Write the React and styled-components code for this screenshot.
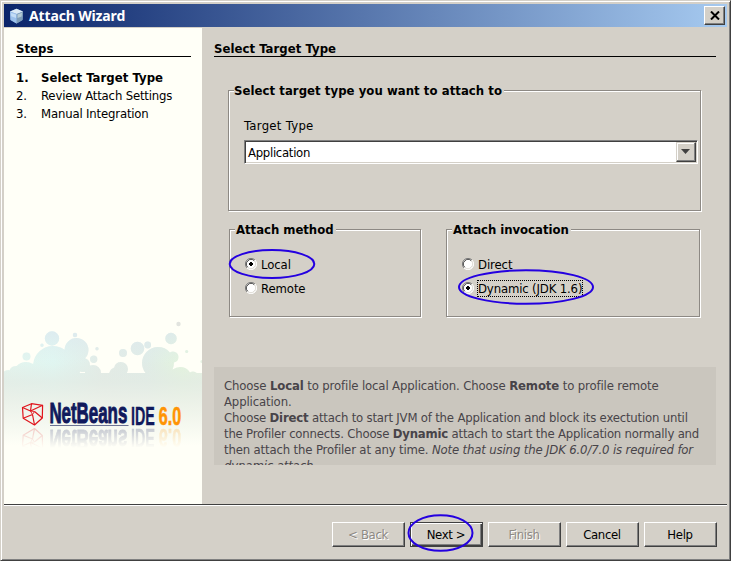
import React from 'react';
import styled, { createGlobalStyle, css } from 'styled-components';

const Global = createGlobalStyle`
  * { box-sizing: border-box; }
  body { margin: 0; background: #d4d0c8; }
`;

const Window = styled.div`
  width: 731px;
  height: 561px;
  padding: 2px 2px 0 2px;
  display: flex;
  flex-direction: column;
  overflow: hidden;
  background: #d4d0c8;
  color: #000;
  font: 13px/18px "DejaVu Sans Condensed", "DejaVu Sans", sans-serif;
  letter-spacing: -0.13px;
  white-space: nowrap;
  border: 1px solid;
  border-color: #d4d0c8 #404040 #404040 #d4d0c8;
  box-shadow: inset 1px 1px 0 #fff, inset -1px -1px 0 #808080;
`;

const TitleBar = styled.header`
  height: 23px;
  margin: 1px 0 0 1px;
  flex: none;
  width: 723px;
  padding: 0 2px 0 5px;
  display: flex;
  align-items: center;
  background: linear-gradient(90deg, #0a246a, #a6caf0);
`;

const Title = styled.h1`
  flex: 1;
  margin: 1px 0 0 5px;
  font: bold 14px/18px "Noto Sans", sans-serif;
  letter-spacing: -0.15px;
  color: #fff;
`;

const raised = css`
  border: 1px solid;
  border-color: #fff #404040 #404040 #fff;
  box-shadow: inset -1px -1px 0 #808080;
`;

const CloseButton = styled.button`
  ${raised}
  width: 21px;
  height: 19px;
  padding: 0;
  display: grid;
  place-items: center;
  background: #d4d0c8;
`;

const Body = styled.div`
  display: flex;
  width: 723px;
  height: 476px;
  flex: none;
  margin: 1px 0 0 1px;
`;

const Sidebar = styled.aside`
  width: 198px;
  background: #fffff7;
  display: flex;
  flex-direction: column;
  justify-content: space-between;
`;

const StepsPane = styled.div`
  padding: 12px 11px 0 12px;
`;

const Heading = styled.h2`
  margin: 0;
  height: 17px;
  border-bottom: 1px solid #000;
  font-size: 13px;
  line-height: 17px;
  letter-spacing: 0.05px;
`;

const StepList = styled.ol`
  margin: 12px 0 0;
  padding: 0;
  list-style: none;
`;

const Step = styled.li`
  display: grid;
  grid-template-columns: 25px 1fr;
  height: 18px;
  font-weight: ${(p) => (p.$current ? 'bold' : 'normal')};
  letter-spacing: ${(p) => (p.$current ? '0.05px' : '-0.17px')};
`;

const Artwork = styled.svg`
  display: block;
  width: 198px;
  height: 150px;
  margin-bottom: 44px;
  letter-spacing: 0;
`;

const Main = styled.main`
  flex: 1;
  padding: 12px 11px 0 12px;
`;

const Group = styled.fieldset`
  position: relative;
  margin: 0;
  width: ${(p) => p.$w}px;
  height: ${(p) => p.$h}px;
  padding: ${(p) => p.$pad};
  border: 1px solid #8d8984;
  box-shadow: 1px 1px 0 #fff, inset 1px 1px 0 #fff;
`;

const GroupTitle = styled.h3`
  position: absolute;
  top: -8px;
  left: 5px;
  margin: 0;
  padding: 0 2px 0 ${(p) => p.$indent || 0}px;
  background: #d4d0c8;
  font-size: 13px;
  line-height: 16px;
  letter-spacing: ${(p) => (p.$indent ? '-0.03px' : '0.05px')};
`;

const TargetGroup = styled(Group)`
  margin: 33px 0 0 14px;
`;

const FieldLabel = styled.div`
  height: 18px;
  letter-spacing: 0.3px;
`;

const Combo = styled.div`
  display: flex;
  width: 454px;
  height: 24px;
  margin-top: 5px;
  background: #fff;
  border: 1px solid;
  border-color: #808080 #fff #fff #808080;
  box-shadow: inset 1px 1px 0 #404040, inset -1px -1px 0 #d4d0c8;
`;

const ComboValue = styled.span`
  flex: 1;
  padding: 3px 0 0 3px;
  letter-spacing: -0.3px;
`;

const ComboButton = styled.button`
  ${raised}
  width: 20px;
  height: 20px;
  margin: 1px 1px 0 0;
  padding: 0 2px 1px 0;
  display: grid;
  place-items: center;
  background: #d4d0c8;
  border-color: #d4d0c8 #404040 #404040 #d4d0c8;
  box-shadow: inset -1px -1px 0 #808080, inset 1px 1px 0 #fff;
`;

const GroupRow = styled.div`
  display: flex;
  gap: 25px;
  margin: 18px 0 0 15px;
`;

const Option = styled.label`
  display: flex;
  align-items: center;
  gap: 3px;
  height: 24px;
`;

const OptionText = styled.span`
  padding: 0 1px;
  line-height: 17px;
  height: 17px;
  outline: ${(p) => (p.$focused ? '1px dotted #000' : 'none')};
  outline-offset: -1px;
  letter-spacing: ${(p) => (p.$focused ? '-0.15px' : '-0.1px')};
`;

const HelpBox = styled.section`
  width: 502px;
  height: 98px;
  margin-top: 50px;
  padding: 11px 0 0 10px;
  overflow: hidden;
  background: #cac6be;
  color: #484449;
  line-height: 16px;
`;

const HelpLine = styled.div`
  height: 16px;
  letter-spacing: ${(p) => p.$ls || -0.13}px;
`;

const Footer = styled.footer`
  width: 723px;
  margin-left: 1px;
  border-top: 1px solid #404040;
  box-shadow: inset 0 1px 0 #fff;
  padding: 17px 10px 0 0;
  display: flex;
  justify-content: flex-end;
  gap: 5px;
  height: 54px;
`;

const PushButton = styled.button`
  ${raised}
  width: 73px;
  height: 25px;
  padding: 0 1px 0 0;
  background: #d4d0c8;
  font: inherit;
  letter-spacing: -0.35px;
  color: ${(p) => (p.disabled ? '#8d8984' : '#000')};
  text-shadow: ${(p) => (p.disabled ? '1px 1px 0 #fff' : 'none')};
  ${(p) =>
    p.$primary &&
    css`
      border-color: #404040;
      box-shadow: inset 1px 1px 0 #fff, inset -1px -1px 0 #404040, inset -2px -2px 0 #808080;
    `}
`;

const Markup = styled.svg`
  position: absolute;
  top: 0;
  left: 0;
  pointer-events: none;
`;

const CubeIcon = () => (
  <svg width="15" height="16" viewBox="0 0 15 16">
    <path d="M1 3.5 7.5 .8 14 3.5 13.5 12 7.5 15.5 1.5 12Z" fill="#86abd8" />
    <path d="M1 3.5 7.5 .8 14 3.5 7.8 6Z" fill="#dbe9f5" />
    <path d="M1 3.5 7.8 6 7.6 15.4 1.5 12Z" fill="#9bc0ec" />
    <path d="M2 5 7 6.6 7 10 2.2 8.2Z" fill="#c3dcf6" />
    <path d="M7.8 6 14 3.5 13.5 12 7.6 15.4Z" fill="#7e9cb8" />
    <path d="M8.5 6.5 13 4.8 12.6 8.6 8.5 10Z" fill="#b5cbd5" />
  </svg>
);

const CloseIcon = () => (
  <svg width="10" height="9" viewBox="0 0 10 9">
    <path d="M1 .5 9 8.5M9 .5 1 8.5" stroke="#000" strokeWidth="2" />
  </svg>
);

const Radio = ({ checked }) => (
  <svg width="12" height="12" viewBox="0 0 12 12">
    <circle cx="6" cy="6" r="5.2" fill="#fff" />
    <path d="M2 10A5.5 5.5 0 0 1 10 2" fill="none" stroke="#808080" />
    <path d="M2.7 9.2A4.6 4.6 0 0 1 9.2 2.7" fill="none" stroke="#404040" />
    <path d="M10 2A5.5 5.5 0 0 1 2 10" fill="none" stroke="#fff" />
    <path d="M9.3 2.8A4.6 4.6 0 0 1 2.8 9.3" fill="none" stroke="#d4d0c8" strokeWidth=".8" />
    {checked && <path d="M5 4h2v1h1v2h-1v1h-2v-1h-1v-2h1z" fill="#000" shapeRendering="crispEdges" />}
  </svg>
);

const bubbles = [
  [52, 338.5, 7.2], [75, 335, 2.2], [42, 345.3, 1.7], [26.5, 356.5, 4], [97, 348.7, 1.7],
  [76.5, 350, 12], [93.7, 359.3, 3.7], [123, 353, 4], [137.5, 348.5, 6.8], [147.7, 345, 3.4],
  [171, 338.5, 5.7], [186.7, 351.5, 1.6], [202, 361.5, 1.6],
  [53, 366, 20], [26, 375, 13], [16, 373, 7], [8, 376, 6], [68, 365, 14], [83, 365, 7], [93, 373, 8],
  [121, 369, 7], [117, 375, 8], [158, 363, 16], [173, 357, 5.5], [180, 379, 12], [193, 377, 5.5],
];

const Wordmark = () => (
  <g>
    <g fill="none" stroke="#e0141c" strokeWidth="1.2" strokeLinejoin="round">
      <path d="M22.5 407.5 31.5 403.7 42.6 405.3 42.3 418 34.5 425 23.2 418.3Z" />
      <path d="M22.5 407.5 30.5 411 42.6 405.3M31.5 403.7 30.5 411M32.5 414.5 23.2 418.3M32.5 414.5 34.5 425M34.5 411.5 42.3 418" />
      <path d="M30.5 411 34.5 411.5 32.5 414.5Z" strokeWidth=".9" />
    </g>
    <g fontFamily="Liberation Sans, sans-serif" fontWeight="bold">
      <text transform="translate(49.4 423.4) scale(.583 1)" fontSize="29" fill="#10195c" stroke="#10195c" strokeWidth="1">NetBeans</text>
      <text transform="translate(131 424.7) scale(.55 1)" fontSize="26" fill="#10195c" stroke="#10195c" strokeWidth=".4">IDE</text>
      <text transform="translate(158.8 424.7) scale(.61 1)" fontSize="26.5" fill="#ff9404" stroke="#ff9404" strokeWidth=".6">6.0</text>
    </g>
  </g>
);

const Branding = () => (
  <Artwork viewBox="4 310 198 150">
    <defs>
      <linearGradient id="tint" gradientUnits="userSpaceOnUse" x1="4" y1="0" x2="202" y2="0">
        <stop offset="0" stopColor="#e4f5ee" />
        <stop offset=".25" stopColor="#e0f7f2" />
        <stop offset=".5" stopColor="#e3ebe6" />
        <stop offset=".72" stopColor="#e0ece7" />
        <stop offset=".9" stopColor="#e3f4dd" />
        <stop offset="1" stopColor="#e6f2e1" />
      </linearGradient>
      <linearGradient id="sky" gradientUnits="userSpaceOnUse" x1="0" y1="330" x2="0" y2="365">
        <stop offset="0" stopColor="#dce7ef" stopOpacity=".75" />
        <stop offset="1" stopColor="#e0eeee" stopOpacity="0" />
      </linearGradient>
      <linearGradient id="ground" gradientUnits="userSpaceOnUse" x1="0" y1="360" x2="0" y2="445">
        <stop offset="0" stopColor="#e1e9e3" stopOpacity="0" />
        <stop offset=".26" stopColor="#e3ebe4" stopOpacity=".7" />
        <stop offset=".45" stopColor="#ebf0e8" stopOpacity=".85" />
        <stop offset="1" stopColor="#fffff7" />
      </linearGradient>
      <linearGradient id="fade" gradientUnits="userSpaceOnUse" x1="0" y1="428" x2="0" y2="448">
        <stop offset="0" stopColor="#fff" stopOpacity=".22" />
        <stop offset="1" stopColor="#fff" stopOpacity="0" />
      </linearGradient>
      <mask id="reflect" maskUnits="userSpaceOnUse" x="4" y="428" width="198" height="22">
        <rect x="4" y="428" width="198" height="22" fill="url(#fade)" />
      </mask>
      <clipPath id="shape">
        {bubbles.map(([x, y, r]) => <circle key={`${x}-${y}`} cx={x} cy={y} r={r} />)}
        <rect x="4" y="373" width="198" height="72" />
      </clipPath>
    </defs>
    <g clipPath="url(#shape)">
      <rect x="4" y="310" width="198" height="135" fill="url(#tint)" />
      <rect x="4" y="310" width="198" height="60" fill="url(#sky)" />
      <rect x="4" y="360" width="198" height="85" fill="url(#ground)" />
    </g>
    <circle cx="178.5" cy="324" r="2.2" fill="#e2e4df" />
    <Wordmark />
    <path d="M50 425.5H128.5" stroke="#6d7394" />
    <g mask="url(#reflect)">
      <g transform="matrix(1 0 0 -1 0 853.5)"><Wordmark /></g>
    </g>
  </Artwork>
);

export default function App() {
  return (
    <>
      <Global />
      <Window>
        <TitleBar>
          <CubeIcon />
          <Title>Attach Wizard</Title>
          <CloseButton aria-label="Close"><CloseIcon /></CloseButton>
        </TitleBar>
        <Body>
          <Sidebar>
            <StepsPane>
              <Heading>Steps</Heading>
              <StepList>
                <Step $current><span>1.</span><span>Select Target Type</span></Step>
                <Step><span>2.</span><span>Review Attach Settings</span></Step>
                <Step><span>3.</span><span>Manual Integration</span></Step>
              </StepList>
            </StepsPane>
            <Branding />
          </Sidebar>
          <Main>
            <Heading>Select Target Type</Heading>
            <TargetGroup $w={473} $h={121} $pad="26px 0 0 15px">
              <GroupTitle>Select target type you want to attach to</GroupTitle>
              <FieldLabel>Target Type</FieldLabel>
              <Combo>
                <ComboValue>Application</ComboValue>
                <ComboButton aria-label="Open list">
                  <svg width="9" height="5" viewBox="0 0 9 5"><path d="M0 0h9L4.5 5z" fill="#404040" /></svg>
                </ComboButton>
              </Combo>
            </TargetGroup>
            <GroupRow>
              <Group $w={192} $h={88} $pad="22px 0 0 15px">
                <GroupTitle $indent={1}>Attach method</GroupTitle>
                <Option><Radio checked /><OptionText>Local</OptionText></Option>
                <Option><Radio /><OptionText>Remote</OptionText></Option>
              </Group>
              <Group $w={254} $h={88} $pad="22px 0 0 15px">
                <GroupTitle $indent={1}>Attach invocation</GroupTitle>
                <Option><Radio /><OptionText>Direct</OptionText></Option>
                <Option><Radio checked /><OptionText $focused>Dynamic (JDK 1.6)</OptionText></Option>
              </Group>
            </GroupRow>
            <HelpBox>
              <HelpLine>Choose <b>Local</b> to profile local Application. Choose <b>Remote</b> to profile remote</HelpLine>
              <HelpLine>Application.</HelpLine>
              <HelpLine $ls={-0.19}>Choose <b>Direct</b> attach to start JVM of the Application and block its exectution until</HelpLine>
              <HelpLine $ls={-0.2}>the Profiler connects. Choose <b>Dynamic</b> attach to start the Application normally and</HelpLine>
              <HelpLine $ls={-0.15}>then attach the Profiler at any time. <i>Note that using the JDK 6.0/7.0 is required for</i></HelpLine>
              <HelpLine><i>dynamic attach.</i></HelpLine>
            </HelpBox>
          </Main>
        </Body>
        <Footer>
          <PushButton disabled>&lt; Back</PushButton>
          <PushButton $primary>Next &gt;</PushButton>
          <PushButton disabled>Finish</PushButton>
          <PushButton>Cancel</PushButton>
          <PushButton>Help</PushButton>
        </Footer>
      </Window>
      <Markup width="731" height="561" viewBox="0 0 731 561" fill="none" stroke="#2400e0" strokeWidth="2">
        <ellipse cx="272" cy="264" rx="42.3" ry="14" />
        <ellipse cx="526" cy="287" rx="67" ry="16.8" />
        <ellipse cx="440.5" cy="533" rx="32" ry="17.8" />
      </Markup>
    </>
  );
}
